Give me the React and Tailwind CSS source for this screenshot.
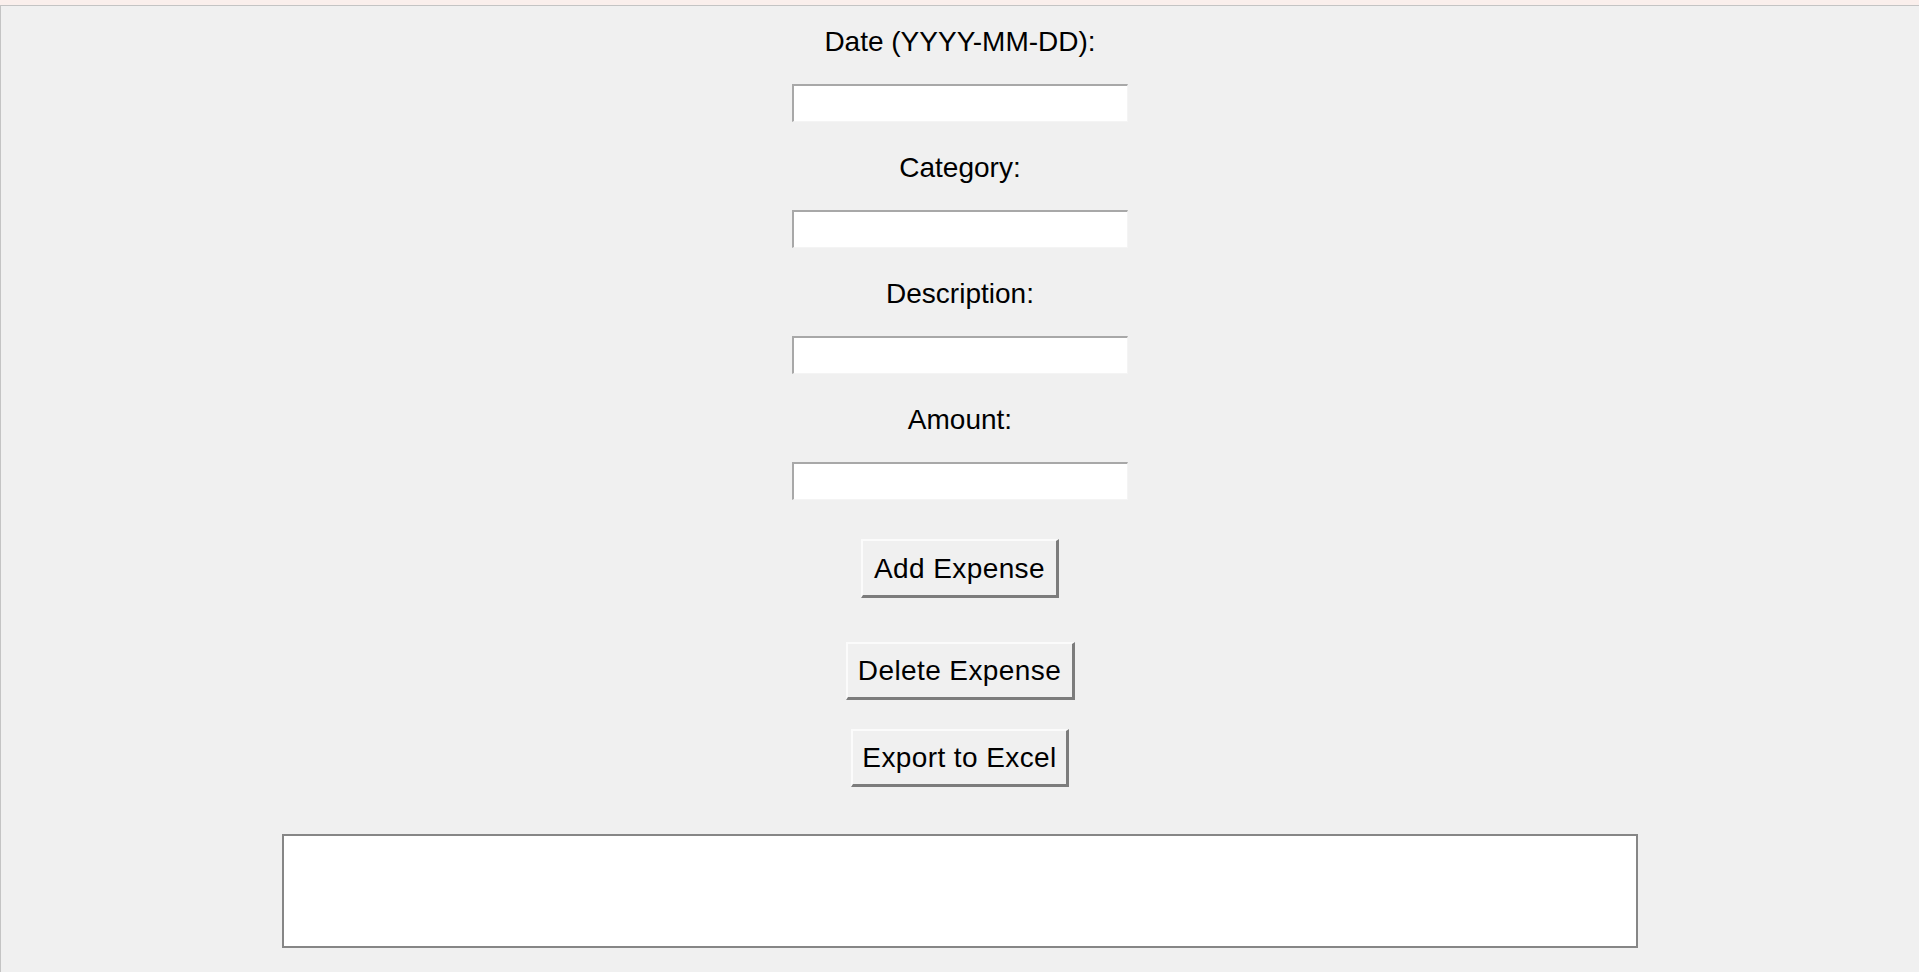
export default function App() {
  const font = { fontFamily: '"Liberation Sans", Arial, sans-serif' };
  const fields = ["Date (YYYY-MM-DD):", "Category:", "Description:", "Amount:"];
  const entry =
    "block w-[336px] h-[38px] bg-white border-t-2 border-l-2 border-r border-b border-t-[#a8a8a8] border-l-[#a8a8a8] border-r-[#f4f4f4] border-b-[#f4f4f4]";
  const btn =
    "flex items-center justify-center bg-[#f0f0f0] text-[28px] leading-[31px] tracking-[0.4px] text-black border-t-2 border-l-2 border-r-[3px] border-b-[3px] border-t-[#fbfbfb] border-l-[#fbfbfb] border-r-[#7c7c7c] border-b-[#7c7c7c]";
  return (
    <div className="w-[1919px] h-[972px] bg-[#f0f0f0] flex flex-col overflow-hidden" style={font}>
      <div className="h-[5px] bg-[#faefec] shrink-0" />
      <div className="h-px bg-[#c4c4c4] shrink-0" />
      <div className="flex-1 border-l border-l-[#c4c4c4] flex flex-col items-center">
        {fields.map((f, i) => (
          <div key={f} className={`flex flex-col items-center ${i === 0 ? "mt-[20px]" : "mt-[30px]"}`}>
            <div className="text-[28px] leading-[31px] text-black h-[31px]">{f}</div>
            <div className="mt-[27px]">
              <div className={entry} />
            </div>
          </div>
        ))}
        <button className={`${btn} mt-[39px] w-[198px] h-[59px]`}>Add Expense</button>
        <button className={`${btn} mt-[44px] w-[229px] h-[58px]`}>Delete Expense</button>
        <button className={`${btn} mt-[29px] w-[218px] h-[58px]`}>Export to Excel</button>
        <div className="mt-[47px] w-[1356px] h-[114px] bg-white border-2 border-[#868686]" />
      </div>
    </div>
  );
}
